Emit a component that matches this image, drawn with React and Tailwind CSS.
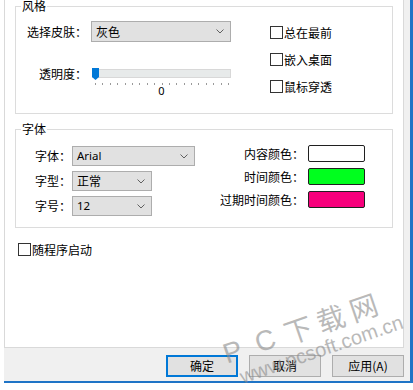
import React from 'react';

const Chevron = () => (
    <svg width="8" height="5" viewBox="0 0 8 5" className="shrink-0">
        <path d="M0.5 0.5 L4 4 L7.5 0.5" fill="none" stroke="#606060" strokeWidth="1" />
    </svg>
);

function Select({ value, className }) {
    return (
        <div className={`flex items-center justify-between bg-[#e1e1e1] border border-[#adadad] pl-[4px] pr-[6px] ${className}`}>
            <span className="leading-[14px]">{value}</span>
            <Chevron />
        </div>
    );
}

function Check({ label }) {
    return (
        <div className="flex items-center h-[13px]">
            <div className="w-[13px] h-[13px] border border-[#333333] bg-white shrink-0" />
            <span className="ml-[1px] leading-[13px]">{label}</span>
        </div>
    );
}

function Swatch({ label, color }) {
    return (
        <div className="flex items-center justify-end h-[17px]">
            <span className="leading-[14px]">{label}</span>
            <div className={`ml-[4px] w-[57px] h-[17px] border border-[#202020] rounded-[2px] ${color}`} />
        </div>
    );
}

function Slider() {
    const ticks = [];
    for (let i = 0; i < 19; i++) ticks.push(3 + i * 7.39);
    return (
        <div className="flex flex-col w-[139px]">
            <svg width="139" height="18" viewBox="0 0 139 18">
                <rect x="0.5" y="1.5" width="138" height="8" fill="#e7eaea" stroke="#d8d8d8" />
                <path d="M0 0 H7 V9 L3.5 12 L0 9 Z" fill="#0078d7" />
                {ticks.map((x, i) => (
                    <rect key={i} x={Math.round(x)} y="15" width="1" height="2" fill="#9a9a9a" />
                ))}
            </svg>
            <div className="h-[10px] leading-[10px] text-center text-[11px] font-['Noto_Sans',sans-serif]">0</div>
        </div>
    );
}

export default function App() {
    return (
        <div className="relative w-[413px] h-[390px] bg-white overflow-hidden text-[12px] text-black font-['Noto_Sans_CJK_SC',sans-serif]">
            <div className="ml-[4px] w-[409px] h-[383px] flex flex-col bg-[#f0f0f0] border-r-[3px] border-b-[2px] border-[#1f74c6]">
                {/* tab page */}
                <div className="w-[400px] h-[348px] bg-white border-l border-r border-b border-[#d9d9d9]">
                    <fieldset className="ml-[10px] w-[378px] h-[114px] border border-[#dcdcdc]">
                        <legend className="ml-[5px] px-[1px] h-[12px] leading-[12px]">风格</legend>
                        <div className="flex pl-[11px] pt-[9px]">
                            <div className="w-[204px]">
                                <div className="flex items-center h-[21px]">
                                    <span className="w-[60px] leading-[14px]">选择皮肤：</span>
                                    <Select value="灰色" className="ml-[4px] w-[140px] h-[21px]" />
                                </div>
                                <div className="flex items-start mt-[26px]">
                                    <span className="w-[60px] text-right h-[12px] leading-[12px]">透明度：</span>
                                    <div className="ml-[5px]">
                                        <Slider />
                                    </div>
                                </div>
                            </div>
                            <div className="ml-[39px] mt-[5px] flex flex-col gap-[14px]">
                                <Check label="总在最前" />
                                <Check label="嵌入桌面" />
                                <Check label="鼠标穿透" />
                            </div>
                        </div>
                    </fieldset>

                    <fieldset className="ml-[10px] mt-[9px] w-[378px] h-[105px] border border-[#dcdcdc]">
                        <legend className="ml-[5px] px-[1px] h-[12px] leading-[12px]">字体</legend>
                        <div className="flex pt-[11px]">
                            <div className="pl-[19px] flex flex-col gap-[5px]">
                                <div className="flex items-center h-[20px]">
                                    <span className="w-[37px] leading-[14px]">字体：</span>
                                    <Select value="Arial" className="w-[123px] h-[20px] font-['Noto_Sans',sans-serif] text-[11.5px]" />
                                </div>
                                <div className="flex items-center h-[20px]">
                                    <span className="w-[37px] leading-[14px]">字型：</span>
                                    <Select value="正常" className="w-[80px] h-[20px]" />
                                </div>
                                <div className="flex items-center h-[20px]">
                                    <span className="w-[37px] leading-[14px]">字号：</span>
                                    <Select value="12" className="w-[80px] h-[20px] font-['Noto_Sans',sans-serif] text-[11.5px]" />
                                </div>
                            </div>
                            <div className="ml-auto mr-[27px] -mt-[1px] flex flex-col gap-[6px]">
                                <Swatch label="内容颜色：" color="bg-white" />
                                <Swatch label="时间颜色：" color="bg-[#00ff1e]" />
                                <Swatch label="过期时间颜色：" color="bg-[#f7007c]" />
                            </div>
                        </div>
                    </fieldset>

                    <div className="ml-[13px] mt-[15px]">
                        <Check label="随程序启动" />
                    </div>
                </div>

                {/* buttons */}
                <div className="flex justify-end gap-[11px] pt-[7px] pr-[6px]">
                    <button className="w-[72px] h-[22px] bg-[#e1e1e1] border-2 border-[#0078d7] leading-[14px]">确定</button>
                    <button className="w-[72px] h-[22px] bg-[#e1e1e1] border border-[#adadad] leading-[14px]">取消</button>
                    <button className="w-[72px] h-[22px] bg-[#e1e1e1] border border-[#adadad] leading-[14px]">应用(A)</button>
                </div>
            </div>

            {/* watermark */}
            <div className="absolute left-[218px] top-[313px] w-[180px] h-[54px] -rotate-[19deg] text-[#8c8c8c] opacity-60 pointer-events-none">
                <div className="flex justify-between w-[168px] h-[27px] leading-[27px] text-[28px]">
                    <span className="w-[30px] text-center font-['Liberation_Sans',sans-serif]">P</span>
                    <span className="w-[30px] text-center font-['Liberation_Sans',sans-serif]">C</span>
                    <span className="w-[30px] text-center">下</span>
                    <span className="w-[30px] text-center">载</span>
                    <span className="w-[30px] text-center">网</span>
                </div>
                <div className="h-[27px] leading-[27px] pl-[14px] text-center text-[20px] font-['Liberation_Sans',sans-serif]">www.pcsoft.com.cn</div>
            </div>
        </div>
    );
}
